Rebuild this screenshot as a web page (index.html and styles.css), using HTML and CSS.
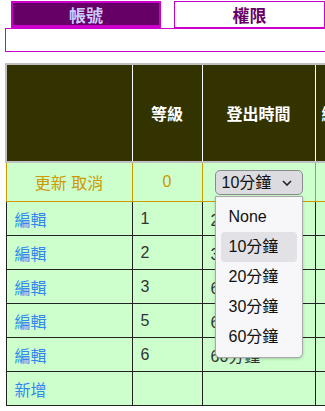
FILE: index.html
```html
<!DOCTYPE html>
<html lang="zh-Hant">
<head>
    <meta charset="UTF-8">
    <meta name="viewport" content="width=device-width, initial-scale=1.0">
    <title>權限設定</title>
    <link rel="stylesheet" href="styles.css">
</head>
<body>
    <div class="tabs">
        <a class="tab active" href="#">帳號</a>
        <a class="tab" href="#">權限</a>
    </div>
    <div class="tab-panel"></div>

    <table class="grid">
        <colgroup>
            <col class="c-act">
            <col class="c-level">
            <col class="c-time">
            <col class="c-more">
        </colgroup>
        <thead>
            <tr>
                <th></th>
                <th>等級</th>
                <th>登出時間</th>
                <th class="more">綁定帳號</th>
            </tr>
        </thead>
        <tbody>
            <tr class="editing">
                <td class="center">更新 取消</td>
                <td class="center">0</td>
                <td class="center">
                    <div class="picker">
                        <select class="picker-select">
                            <option>None</option>
                            <option selected>10分鐘</option>
                            <option>20分鐘</option>
                            <option>30分鐘</option>
                            <option>60分鐘</option>
                        </select>
                        <svg class="chev" width="10" height="6" viewBox="0 0 10 6"><path d="M1 1 L5 5 L9 1" fill="none" stroke="#222" stroke-width="1.6"/></svg>
                        <ul class="picker-list">
                            <li>None</li>
                            <li class="hover">10分鐘</li>
                            <li>20分鐘</li>
                            <li>30分鐘</li>
                            <li>60分鐘</li>
                        </ul>
                    </div>
                </td>
                <td></td>
            </tr>
            <tr>
                <td><a href="#">編輯</a></td>
                <td>1</td>
                <td>20分鐘</td>
                <td></td>
            </tr>
            <tr>
                <td><a href="#">編輯</a></td>
                <td>2</td>
                <td>30分鐘</td>
                <td></td>
            </tr>
            <tr>
                <td><a href="#">編輯</a></td>
                <td>3</td>
                <td>60分鐘</td>
                <td></td>
            </tr>
            <tr>
                <td><a href="#">編輯</a></td>
                <td>5</td>
                <td>60分鐘</td>
                <td></td>
            </tr>
            <tr>
                <td><a href="#">編輯</a></td>
                <td>6</td>
                <td>60分鐘</td>
                <td></td>
            </tr>
            <tr>
                <td><a href="#">新增</a></td>
                <td></td>
                <td></td>
                <td></td>
            </tr>
        </tbody>
    </table>
</body>
</html>
```

FILE: styles.css
```css
html, body {
    overflow: hidden;
}
body {
    margin: 0;
    font-family: "Liberation Sans", "Noto Sans CJK TC", sans-serif;
    font-size: 16px;
    color: #333;
    background-color: white;
}
.tabs {
    display: flex;
    gap: 13px;
    margin: 1px 0 0 11px;
}
.tab {
    box-sizing: border-box;
    display: flex;
    align-items: center;
    justify-content: center;
    width: 151px;
    height: 27px;
    border: 1px solid #cc00cc;
    background-color: white;
    color: #660066;
    font-weight: bold;
    font-size: 17px;
    text-decoration: none;
}
.tab.active {
    width: 150px;
    border-width: 2px 2px 3px 2px;
    background-color: #660066;
    color: #ccccff;
}
.tab-panel {
    box-sizing: border-box;
    width: 340px;
    height: 24px;
    margin-left: 5px;
    border: 1px solid #cc00cc;
}
.grid {
    border-collapse: collapse;
    table-layout: fixed;
    width: 369px;
    margin: 11px 0 0 5px;
}
.c-act { width: 126px; }
.c-level { width: 70px; }
.c-time { width: 113px; }
.c-more { width: 60px; }
th {
    height: 96px;
    padding: 0;
    background-color: #333300;
    color: white;
    font-weight: bold;
    border: 1px solid white;
    border-top: 2px solid #c0c0c0;
    border-bottom: 2px solid #c0c0c0;
}
th:first-child {
    border-left: 2px solid #c0c0c0;
}
th.more {
    text-align: left;
    padding-left: 6px;
    white-space: nowrap;
}
td {
    height: 33px;
    padding: 0 8px;
    background-color: #ccffcc;
    border: 1px solid #222;
    white-space: nowrap;
}
td a {
    color: #3388ee;
    text-decoration: none;
}
.editing td {
    height: 38px;
    border: 1px solid #cc9900;
    color: #cc9900;
}
.center {
    text-align: center;
}
.picker {
    position: relative;
    display: inline-block;
    vertical-align: middle;
}
.picker-select {
    appearance: none;
    box-sizing: border-box;
    display: block;
    width: 88px;
    height: 25px;
    padding: 0 0 0 6px;
    border: 1px solid #8a8a8e;
    border-radius: 5px;
    background-color: #dcdce0;
    color: #111;
    font-family: "Liberation Sans", "Noto Sans CJK TC", sans-serif;
    font-size: 16px;
}
.chev {
    position: absolute;
    top: 10px;
    right: 11px;
}
.picker-list {
    position: absolute;
    top: 26px;
    left: 0;
    box-sizing: border-box;
    width: 88px;
    margin: 0;
    padding: 5px 5px;
    list-style: none;
    background-color: #f7f7fa;
    border: 1px solid #a8a8ac;
    border-radius: 0 0 5px 5px;
    box-shadow: 0 1px 3px rgba(0, 0, 0, 0.2);
    text-align: left;
    z-index: 2;
}
.picker-list li {
    height: 30px;
    line-height: 30px;
    padding-left: 8px;
    border-radius: 4px;
    color: #111;
}
.picker-list li.hover {
    background-color: #e1e1e6;
}
```
